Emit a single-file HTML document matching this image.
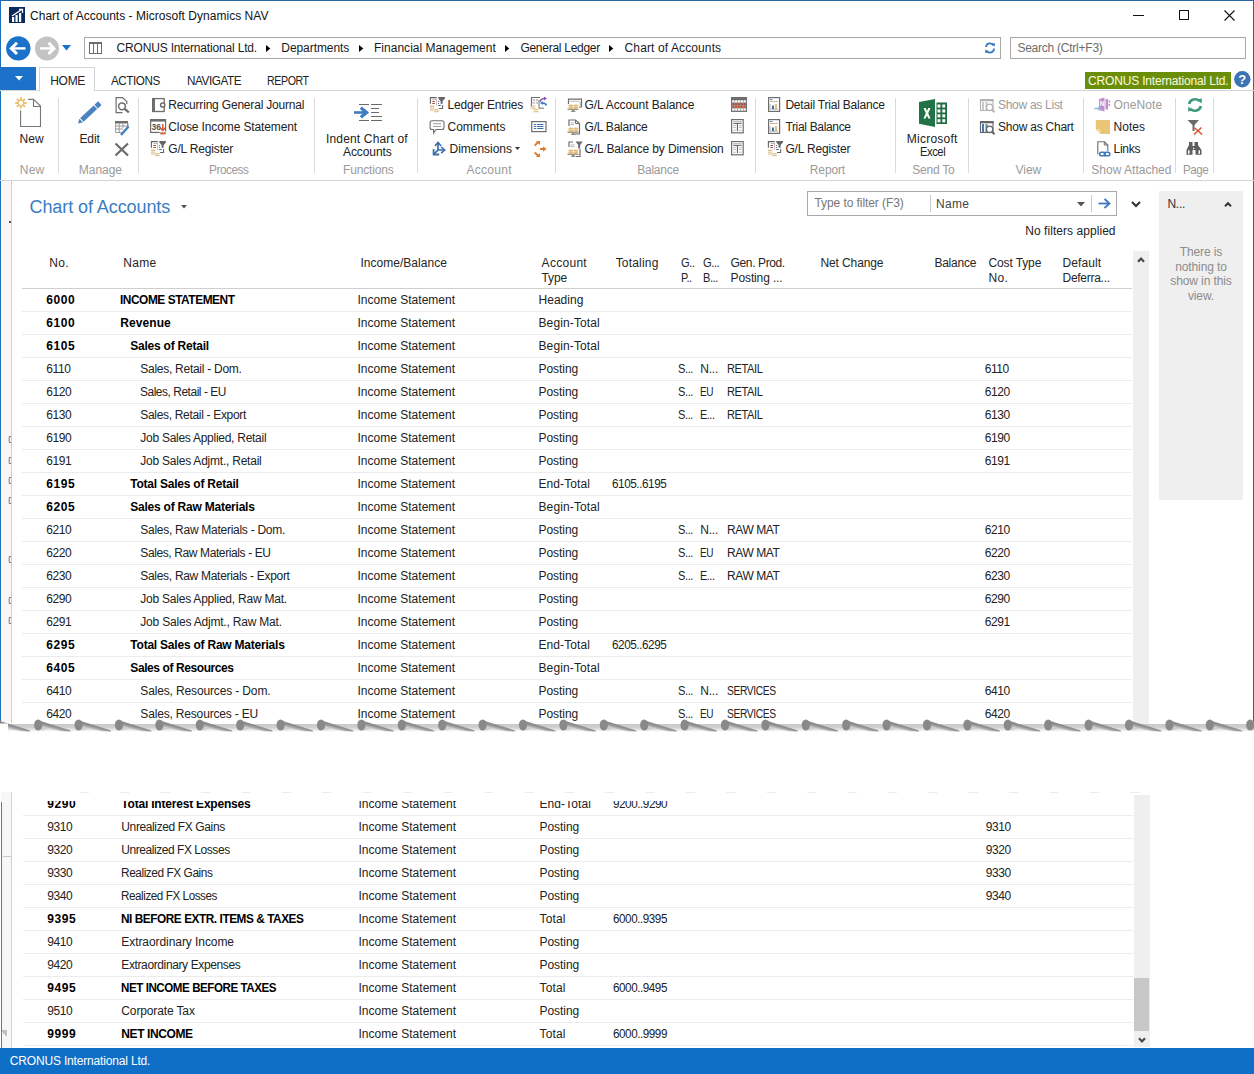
<!DOCTYPE html><html><head><meta charset="utf-8"><title>Chart of Accounts</title><style>
*{box-sizing:border-box;margin:0;padding:0}
html,body{width:1254px;height:1074px;overflow:hidden;background:#fff}
body{position:relative;font-family:"Liberation Sans",sans-serif;font-size:12px;color:#222}
.a{position:absolute;white-space:nowrap}
.t{position:absolute;white-space:nowrap;line-height:14px;letter-spacing:-0.2px}
.g{color:#9a9a9a}
.b{font-weight:bold;color:#000;letter-spacing:-0.45px}
.sep{position:absolute;width:1px;background:#dadada;top:98px;height:75px}
.row{position:absolute;left:22px;width:1110px;height:23px;border-bottom:1px solid #ececec}
.row span{position:absolute;top:0;line-height:22px;white-space:nowrap;letter-spacing:-0.2px}
.row span.b{letter-spacing:-0.45px}
svg{position:absolute;overflow:visible}
</style></head><body><div class="a" style="left:0;top:0;width:1254px;height:1px;background:#2868a4"></div>
<div class="a" style="left:0;top:0;width:1px;height:721px;background:#1e6fb8"></div>
<div class="a" style="left:1253px;top:0;width:1px;height:721px;background:#2868a4"></div>
<svg style="left:9px;top:7px" width="16" height="16" viewBox="0 0 16 16"><rect width="16" height="16" fill="#0b2a5a"/><rect x="3" y="10" width="2.2" height="5" fill="#fff"/><rect x="6.5" y="8" width="2.2" height="7" fill="#fff"/><rect x="10" y="6" width="2.2" height="9" fill="#fff"/><path d="M3 9 L12 3" stroke="#fff" stroke-width="1.3"/><path d="M10 2.5 L13.5 2.5 L13.5 6" stroke="#fff" stroke-width="1.3" fill="none"/></svg>
<div class="t " style="left:30.0px;top:8.8px;font-size:12px;letter-spacing:0.03px;color:#111">Chart of Accounts - Microsoft Dynamics NAV</div>
<div class="a" style="left:1133px;top:15px;width:11px;height:1px;background:#111"></div>
<div class="a" style="left:1179px;top:10px;width:10px;height:10px;border:1px solid #111"></div>
<svg style="left:1224px;top:10px" width="11" height="11" viewBox="0 0 11 11"><path d="M0.5 0.5 L10.5 10.5 M10.5 0.5 L0.5 10.5" stroke="#111" stroke-width="1.1"/></svg>
<svg style="left:6px;top:36px" width="25" height="25" viewBox="0 0 25 25"><circle cx="12.3" cy="12.4" r="12.2" fill="#1b72c8"/><path d="M5 12.4 L19.5 12.4" stroke="#fff" stroke-width="2.4"/><path d="M11 6.8 L5.3 12.4 L11 18" stroke="#fff" stroke-width="3" fill="none"/></svg>
<svg style="left:35px;top:36px" width="25" height="25" viewBox="0 0 25 25"><circle cx="12" cy="12.4" r="12" fill="#c3c3c3"/><path d="M5 12.4 L19 12.4" stroke="#fff" stroke-width="2.4"/><path d="M13.5 6.8 L19 12.4 L13.5 18" stroke="#fff" stroke-width="3" fill="none"/></svg>
<svg style="left:62px;top:45px" width="10" height="6" viewBox="0 0 10 6"><path d="M0 0 L9 0 L4.5 5.5 Z" fill="#1b72c8"/></svg>
<div class="a" style="left:84px;top:37px;width:917px;height:22px;border:1px solid #a9a9a9;background:#fff"></div>
<svg style="left:89px;top:42px" width="13" height="12" viewBox="0 0 13 12"><rect x="0.5" y="0.5" width="12" height="11" fill="none" stroke="#6d6d6d"/><rect x="0" y="0" width="13" height="2" fill="#6d6d6d"/><path d="M4.5 2 V12 M8.5 2 V12" stroke="#6d6d6d"/></svg>
<div class="t " style="left:116.5px;top:40.8px;font-size:12px;letter-spacing:-0.17px;color:#1a1a1a">CRONUS International Ltd.</div>
<div class="t " style="left:281.3px;top:40.8px;font-size:12px;letter-spacing:-0.07px;color:#1a1a1a">Departments</div>
<div class="t " style="left:374.0px;top:40.8px;font-size:12px;letter-spacing:0.02px;color:#1a1a1a">Financial Management</div>
<div class="t " style="left:520.4px;top:40.8px;font-size:12px;letter-spacing:-0.27px;color:#1a1a1a">General Ledger</div>
<div class="t " style="left:624.6px;top:40.8px;font-size:12px;letter-spacing:0.11px;color:#1a1a1a">Chart of Accounts</div>
<svg style="left:265.8px;top:45px" width="5" height="7" viewBox="0 0 5 7"><path d="M0 0 L4.3 3.5 L0 7Z" fill="#000"/></svg>
<svg style="left:359px;top:45px" width="5" height="7" viewBox="0 0 5 7"><path d="M0 0 L4.3 3.5 L0 7Z" fill="#000"/></svg>
<svg style="left:504.9px;top:45px" width="5" height="7" viewBox="0 0 5 7"><path d="M0 0 L4.3 3.5 L0 7Z" fill="#000"/></svg>
<svg style="left:609px;top:45px" width="5" height="7" viewBox="0 0 5 7"><path d="M0 0 L4.3 3.5 L0 7Z" fill="#000"/></svg>
<svg style="left:984px;top:42px" width="12" height="12" viewBox="0 0 12 12"><path d="M2 5 A4 4 0 0 1 9.5 3.5" stroke="#3a78c2" stroke-width="1.8" fill="none"/><path d="M10 6.5 A4 4 0 0 1 2.5 8.5" stroke="#3a78c2" stroke-width="1.8" fill="none"/><path d="M8 1 L11 1.5 L10.5 5 Z" fill="#3a78c2"/><path d="M4 11 L1 10.5 L1.5 7 Z" fill="#3a78c2"/></svg>
<div class="a" style="left:1010px;top:37px;width:236px;height:22px;border:1px solid #a9a9a9;background:#fff"></div>
<div class="t " style="left:1017.4px;top:41.3px;font-size:12px;letter-spacing:-0.24px;color:#6d6d6d">Search (Ctrl+F3)</div>
<div class="a" style="left:0;top:67px;width:36px;height:23px;background:#1b72c8"></div>
<svg style="left:15px;top:76px" width="8" height="5" viewBox="0 0 8 5"><path d="M0 0 L8 0 L4 4.5Z" fill="#fff"/></svg>
<div class="a" style="left:0;top:90px;width:1254px;height:1px;background:#d4d4d4"></div>
<div class="a" style="left:39px;top:67px;width:56px;height:24px;border:1px solid #d4d4d4;border-bottom:none;background:#fff"></div>
<div class="t " style="left:50.2px;top:73.8px;font-size:12px;letter-spacing:-0.27px;color:#222">HOME</div>
<div class="t " style="left:111.2px;top:73.8px;font-size:12px;letter-spacing:-0.45px;transform:scaleX(0.971);transform-origin:0 0;color:#222">ACTIONS</div>
<div class="t " style="left:186.5px;top:73.8px;font-size:12px;letter-spacing:-0.45px;transform:scaleX(0.979);transform-origin:0 0;color:#222">NAVIGATE</div>
<div class="t " style="left:266.9px;top:73.8px;font-size:12px;letter-spacing:-0.45px;transform:scaleX(0.885);transform-origin:0 0;color:#222">REPORT</div>
<div class="a" style="left:1085px;top:72px;width:146px;height:17px;background:#6b8e0a"></div>
<div class="t " style="left:1088.0px;top:74.3px;font-size:12px;letter-spacing:-0.17px;color:#fbfbe0">CRONUS International Ltd.</div>
<svg style="left:1234px;top:71px" width="17" height="17" viewBox="0 0 17 17"><circle cx="8.3" cy="8.2" r="8.2" fill="#3c73b5"/><text x="8.3" y="13" text-anchor="middle" font-family="Liberation Sans" font-weight="bold" font-size="13" fill="#fff">?</text></svg>
<svg style="left:12px;top:94px" width="40" height="36" viewBox="0 0 40 36"><path d="M16.1 5.4 H21.5 L28.5 12 V32.5 H8.6 V16.4" stroke="#777" stroke-width="1.1" fill="none"/><path d="M21.5 5.4 V12.5 H28.5" stroke="#777" stroke-width="1.1" fill="none"/><g stroke="#e8c070" stroke-width="2"><path d="M8.9 3.2 V6.9 M8.9 10.9 V14.6 M3.2 8.9 H6.9 M10.9 8.9 H14.6 M4.9 4.9 L7.5 7.5 M10.3 10.3 L12.9 12.9 M12.9 4.9 L10.3 7.5 M7.5 10.3 L4.9 12.9"/></g><circle cx="8.9" cy="8.9" r="1.3" fill="#fff"/></svg>
<svg style="left:76px;top:101px" width="26" height="25" viewBox="0 0 26 25"><path d="M2.00 22.50 L6.85 21.40 L3.44 17.74Z M7.58 20.72 L21.12 8.11 L17.71 4.45 L4.18 17.06Z M21.85 7.43 L25.50 4.03 L22.10 0.37 L18.45 3.77Z" fill="#4a82c0"/></svg>
<svg style="left:115px;top:97px" width="16" height="17" viewBox="0 0 16 17"><path d="M7.5 15.6 H1.1 V0.6 H7.5 L11.8 4.6 V7" stroke="#6e6e6e" stroke-width="1.2" fill="none"/><circle cx="7" cy="9.3" r="3.4" stroke="#6e6e6e" stroke-width="1.5" fill="none"/><path d="M9.4 11.7 L13.8 15.3" stroke="#6e6e6e" stroke-width="2.2"/></svg>
<svg style="left:114px;top:120px" width="17" height="16" viewBox="0 0 17 16"><rect x="1" y="1" width="13" height="2.5" fill="#6e6e6e"/><path d="M1.6 3 V12.5 H8 M1.6 6 H13 M1.6 9 H9 M5.2 3.5 V12.5 M9 3.5 V8" stroke="#9a9a9a" stroke-width="1" fill="none"/><path d="M13.8 3.5 V7" stroke="#6e6e6e" stroke-width="1.2"/><path d="M7 15 L14.5 6.5" stroke="#4a82c0" stroke-width="2.6"/></svg>
<svg style="left:114px;top:142px" width="16" height="15" viewBox="0 0 16 15"><path d="M1.5 1.5 L14 13.5 M14 1.5 L1.5 13.5" stroke="#6a6a6a" stroke-width="2.2"/></svg>
<svg style="left:151px;top:97px" width="15" height="16" viewBox="0 0 15 16"><rect x="1.7" y="1.6" width="11.5" height="12.9" fill="none" stroke="#6e6e6e" stroke-width="1.3"/><rect x="1" y="1" width="3" height="14" fill="#6e6e6e"/><circle cx="11.7" cy="8" r="2.1" fill="#fff" stroke="#6e6e6e" stroke-width="1.5"/></svg>
<svg style="left:149px;top:118px" width="18" height="18" viewBox="0 0 18 18"><rect x="1.6" y="1.8" width="15" height="12.6" fill="#fff" stroke="#6e6e6e" stroke-width="1.2"/><rect x="1" y="1" width="16" height="2.6" fill="#6e6e6e"/><text x="2.6" y="11.8" font-family="Liberation Sans" font-size="8.5" font-weight="bold" fill="#555">36</text><path d="M13.8 6 V12" stroke="#d4502a" stroke-width="1.4"/><path d="M11.3 9.8 L13.8 12.5 L16.3 9.8" stroke="#d4502a" stroke-width="1.4" fill="none"/><rect x="11.2" y="14.5" width="5.5" height="1.8" fill="#d4502a"/><rect x="10.5" y="13.5" width="7" height="1" fill="#fff"/></svg>
<svg style="left:150px;top:140px" width="18" height="18" viewBox="0 0 18 18"><path d="M1.4 7.8 V1.6 H7.8" stroke="#636363" stroke-width="1.1" fill="none"/><path d="M3.3 3.5 H8.2 M7.6 3.5 V9.8" stroke="#c4b4b4" stroke-width="0.9" fill="none"/><rect x="3.3" y="5" width="2.6" height="1" fill="#a0503a"/><rect x="3.3" y="7" width="2.6" height="1" fill="#a0503a"/><rect x="9.1" y="5" width="1" height="1" fill="#4a6590"/><rect x="9.1" y="7" width="1" height="1" fill="#4a6590"/><rect x="9.1" y="9" width="2.6" height="1" fill="#4a6590"/><path d="M9.3 0.9 H15.9 V2.6 L13.6 5 V7.8 H11.6 V5 L9.3 2.6Z" fill="#666"/><path d="M13.6 9.3 V12.5 H10" stroke="#636363" stroke-width="1.1" fill="none"/><g fill="#dcc393"><rect x="1" y="9.6" width="4.2" height="1.4"/><rect x="1" y="11.6" width="4.2" height="1.2"/><rect x="1" y="13.4" width="4.2" height="1.2"/><rect x="5.2" y="13" width="4.4" height="1.4"/><rect x="5.2" y="15" width="4.4" height="1.2"/></g><g fill="#f3ead0"><rect x="0.6" y="11" width="5" height="0.6"/><rect x="0.6" y="12.8" width="5" height="0.6"/><rect x="4.8" y="14.4" width="5.2" height="0.6"/></g></svg>
<svg style="left:348px;top:98px" width="40" height="28" viewBox="0 0 40 28"><path d="M6 14.5 H17.5" stroke="#3f7bbf" stroke-width="2.6"/><path d="M12.8 9.8 L18.6 14.5 L12.8 19.2" stroke="#3f7bbf" stroke-width="3.2" fill="none"/><g stroke="#6a6a6a" stroke-width="1.1"><path d="M11 6.5 H21 M23 6.5 H34 M23 10.5 H31 M23 14.5 H31 M23 18.5 H34 M11 22.5 H21 M23 22.5 H34"/></g></svg>
<svg style="left:429px;top:96px" width="18" height="18" viewBox="0 0 18 18"><path d="M1.4 7.8 V1.6 H7.8" stroke="#636363" stroke-width="1.1" fill="none"/><path d="M3.3 3.5 H8.2 M7.6 3.5 V9.8" stroke="#c4b4b4" stroke-width="0.9" fill="none"/><rect x="3.3" y="5" width="2.6" height="1" fill="#a0503a"/><rect x="3.3" y="7" width="2.6" height="1" fill="#a0503a"/><rect x="9.1" y="5" width="1" height="1" fill="#4a6590"/><rect x="9.1" y="7" width="1" height="1" fill="#4a6590"/><rect x="9.1" y="9" width="2.6" height="1" fill="#4a6590"/><path d="M9.3 0.9 H15.9 V2.6 L13.6 5 V7.8 H11.6 V5 L9.3 2.6Z" fill="#666"/><path d="M13.6 9.3 V12.5 H10" stroke="#636363" stroke-width="1.1" fill="none"/><g fill="#dcc393"><rect x="1" y="9.6" width="4.2" height="1.4"/><rect x="1" y="11.6" width="4.2" height="1.2"/><rect x="1" y="13.4" width="4.2" height="1.2"/><rect x="5.2" y="13" width="4.4" height="1.4"/><rect x="5.2" y="15" width="4.4" height="1.2"/></g><g fill="#f3ead0"><rect x="0.6" y="11" width="5" height="0.6"/><rect x="0.6" y="12.8" width="5" height="0.6"/><rect x="4.8" y="14.4" width="5.2" height="0.6"/></g></svg>
<svg style="left:429px;top:119px" width="17" height="16" viewBox="0 0 17 16"><path d="M3 1.7 H13 Q15 1.7 15 3.7 V8.5 Q15 10.5 13 10.5 H7 L4.6 14 V10.5 H3 Q1.1 10.5 1.1 8.5 V3.7 Q1.1 1.7 3 1.7Z" fill="#fff" stroke="#6e6e6e" stroke-width="1.1"/><path d="M4 4.7 H12 M4 7.4 H12" stroke="#9a9a9a" stroke-width="1"/></svg>
<svg style="left:432px;top:141px" width="14" height="15" viewBox="0 0 14 15"><g stroke="#3b6ea8" fill="none" stroke-linecap="square"><path d="M6 1.8 V9 H12.3 M6 9 L2.2 12.8" stroke-width="1.7"/><path d="M3.5 4.3 L6 1.5 L8.5 4.3 M9.8 6.5 L12.6 9 L9.8 11.5" stroke-width="1.6"/><path d="M1.6 8.8 V13.5 H6.3" stroke-width="1.8"/></g></svg>
<svg style="left:530px;top:96px" width="18" height="16" viewBox="0 0 18 16"><path d="M1.5 11 V1.5 H10" stroke="#6e6e6e" stroke-width="1.2" fill="none"/><g fill="#c8c8c8"><rect x="2.8" y="3" width="2.2" height="2"/><rect x="5.8" y="3" width="2.2" height="2"/><rect x="2.8" y="5.8" width="2.2" height="2"/><rect x="5.8" y="5.8" width="2.2" height="2"/></g><path d="M9 4 V12.2 H14" stroke="#6e6e6e" stroke-width="1" fill="none"/><path d="M10 5.5 Q11 2.5 15 2.5" stroke="#8a54a8" stroke-width="1.7" fill="none"/><path d="M14 0.5 L17 2.5 L14 4.5Z" fill="#8a54a8"/><path d="M16.5 9.5 Q15.5 6.8 12 7" stroke="#3f7bbf" stroke-width="1.7" fill="none"/><path d="M12.8 5 L10 7 L12.8 9Z" fill="#3f7bbf"/><g fill="#e5c88c"><rect x="0.5" y="9.5" width="5" height="1.3"/><rect x="0.5" y="11.5" width="5" height="1.3"/><rect x="3.5" y="13.0" width="5" height="1.3"/><rect x="3.5" y="15.0" width="5" height="1.3"/></g></svg>
<svg style="left:530px;top:120px" width="18" height="13" viewBox="0 0 18 13"><rect x="1.7" y="1.6" width="14.3" height="10" fill="#fff" stroke="#6e6e6e" stroke-width="1.2"/><g fill="#3f6fa8"><rect x="3.8" y="4" width="2.4" height="1"/><rect x="7.2" y="4" width="6.3" height="1"/><rect x="3.8" y="6" width="2.4" height="1"/><rect x="7.2" y="6" width="6.3" height="1"/><rect x="3.8" y="8" width="2.4" height="1"/><rect x="7.2" y="8" width="6.3" height="1"/></g></svg>
<svg style="left:533px;top:140px" width="14" height="18" viewBox="0 0 14 18"><g stroke="#e07b28" stroke-width="2" fill="none"><path d="M1.7 5.6 L5.5 1.8 M7 9 H11.5 M1.7 12.5 L5.5 16"/></g><path d="M3 1 H7 V5Z M10 6.2 L13.5 9 L10 11.8Z M3 17 H7 V13Z" fill="#e07b28"/></svg>
<svg style="left:567px;top:98px" width="16" height="15" viewBox="0 0 16 15"><path d="M1.5 6 V1.2 H14.5 V9 H12" stroke="#6e6e6e" stroke-width="1.2" fill="none"/><rect x="3" y="2.8" width="9.5" height="0.8" fill="#aaa"/><rect x="12.7" y="4.5" width="0.9" height="0.9" fill="#555"/><rect x="12.7" y="6.3" width="0.9" height="0.9" fill="#555"/><g fill="#e2bf80"><ellipse cx="3.8" cy="7.7" rx="2.6" ry="1.1"/><ellipse cx="3.8" cy="9.6" rx="2.6" ry="1.1"/><ellipse cx="8.8" cy="7.7" rx="2.6" ry="1.1"/><ellipse cx="8.8" cy="9.6" rx="2.6" ry="1.1"/></g><rect x="0.5" y="10.7" width="11" height="1.1" fill="#8c7b55"/><path d="M3.5 13.8 L6.2 11.8 L9 13.8 Z" fill="#6e6e6e"/></svg>
<svg style="left:567px;top:119px" width="16" height="17" viewBox="0 0 16 17"><g transform="translate(0,2)"><g fill="#e2bf80"><ellipse cx="3.8" cy="7.7" rx="2.6" ry="1.1"/><ellipse cx="3.8" cy="9.6" rx="2.6" ry="1.1"/><ellipse cx="8.8" cy="7.7" rx="2.6" ry="1.1"/><ellipse cx="8.8" cy="9.6" rx="2.6" ry="1.1"/></g><rect x="0.5" y="10.7" width="11" height="1.1" fill="#8c7b55"/><path d="M3.5 13.8 L6.2 11.8 L9 13.8 Z" fill="#6e6e6e"/></g><path d="M2 7 V1 H8.5 L12.5 4.5 V15 H8" stroke="#6e6e6e" stroke-width="1.2" fill="none"/><path d="M8.5 1 V4.5 H12.5" stroke="#6e6e6e" stroke-width="1" fill="none"/><rect x="3.5" y="3.5" width="3.5" height="0.8" fill="#aaa"/><rect x="3.5" y="5.3" width="3.5" height="0.8" fill="#aaa"/></svg>
<svg style="left:567px;top:141px" width="16" height="17" viewBox="0 0 16 17"><g transform="translate(0,2)"><g fill="#e2bf80"><ellipse cx="3.8" cy="7.7" rx="2.6" ry="1.1"/><ellipse cx="3.8" cy="9.6" rx="2.6" ry="1.1"/><ellipse cx="8.8" cy="7.7" rx="2.6" ry="1.1"/><ellipse cx="8.8" cy="9.6" rx="2.6" ry="1.1"/></g><rect x="0.5" y="10.7" width="11" height="1.1" fill="#8c7b55"/><path d="M3.5 13.8 L6.2 11.8 L9 13.8 Z" fill="#6e6e6e"/></g><path d="M2 6 V1 H6" stroke="#6e6e6e" stroke-width="1.2" fill="none"/><path d="M13 8 V15.5 H9" stroke="#6e6e6e" stroke-width="1.2" fill="none"/><path d="M8.5 0.5 H15.8 L13.2 4 V7.5 H11.2 V4 Z" fill="#6e6e6e"/><rect x="3.5" y="3.5" width="4" height="0.8" fill="#aaa"/><rect x="3.5" y="5.3" width="4" height="0.8" fill="#aaa"/></svg>
<svg style="left:731px;top:97px" width="16" height="15" viewBox="0 0 16 15"><rect x="0" y="0" width="16" height="15" fill="#6e6e6e"/><rect x="0.8" y="3" width="14.4" height="11.2" fill="#9a9a9a"/><rect x="1.30" y="3.40" width="2.1" height="2" fill="#fff"/><rect x="1.30" y="6.10" width="2.1" height="2" fill="#a85040"/><rect x="1.30" y="8.80" width="2.1" height="2" fill="#d4502a"/><rect x="1.30" y="11.50" width="2.1" height="2" fill="#fff"/><rect x="4.15" y="3.40" width="2.1" height="2" fill="#fff"/><rect x="4.15" y="6.10" width="2.1" height="2" fill="#a85040"/><rect x="4.15" y="8.80" width="2.1" height="2" fill="#d4502a"/><rect x="4.15" y="11.50" width="2.1" height="2" fill="#fff"/><rect x="7.00" y="3.40" width="2.1" height="2" fill="#fff"/><rect x="7.00" y="6.10" width="2.1" height="2" fill="#a85040"/><rect x="7.00" y="8.80" width="2.1" height="2" fill="#d4502a"/><rect x="7.00" y="11.50" width="2.1" height="2" fill="#fff"/><rect x="9.85" y="3.40" width="2.1" height="2" fill="#fff"/><rect x="9.85" y="6.10" width="2.1" height="2" fill="#a85040"/><rect x="9.85" y="8.80" width="2.1" height="2" fill="#d4502a"/><rect x="9.85" y="11.50" width="2.1" height="2" fill="#fff"/><rect x="12.70" y="3.40" width="2.1" height="2" fill="#fff"/><rect x="12.70" y="6.10" width="2.1" height="2" fill="#a85040"/><rect x="12.70" y="8.80" width="2.1" height="2" fill="#d4502a"/><rect x="12.70" y="11.50" width="2.1" height="2" fill="#fff"/></svg>
<svg style="left:731px;top:119px" width="14" height="15" viewBox="0 0 14 15"><rect x="0.6" y="0.6" width="11.6" height="13.2" fill="#fff" stroke="#6e6e6e" stroke-width="1.2"/><rect x="2.2" y="2.2" width="8.5" height="0.7" fill="#aaa"/><rect x="2.2" y="3.8" width="8.5" height="1" fill="#555"/><rect x="5.9" y="4.3" width="1" height="7.8" fill="#555"/><g fill="#aaa"><rect x="2.2" y="6.3" width="2.6" height="0.8"/><rect x="2.2" y="8" width="2.6" height="0.8"/><rect x="2.2" y="10.8" width="2.6" height="0.8"/><rect x="8" y="6.3" width="2.6" height="0.8"/><rect x="8" y="8" width="2.6" height="0.8"/><rect x="8" y="10.8" width="2.6" height="0.8"/></g></svg>
<svg style="left:731px;top:141px" width="14" height="15" viewBox="0 0 14 15"><rect x="0.6" y="0.6" width="11.6" height="13.2" fill="#fff" stroke="#6e6e6e" stroke-width="1.2"/><rect x="2.2" y="2.2" width="8.5" height="0.7" fill="#aaa"/><rect x="2.2" y="3.8" width="8.5" height="1" fill="#555"/><rect x="5.9" y="4.3" width="1" height="7.8" fill="#555"/><g fill="#aaa"><rect x="2.2" y="6.3" width="2.6" height="0.8"/><rect x="2.2" y="8" width="2.6" height="0.8"/><rect x="2.2" y="10.8" width="2.6" height="0.8"/><rect x="8" y="6.3" width="2.6" height="0.8"/><rect x="8" y="8" width="2.6" height="0.8"/><rect x="8" y="10.8" width="2.6" height="0.8"/></g></svg>
<svg style="left:768px;top:97px" width="13" height="15" viewBox="0 0 13 15"><rect x="0.6" y="0.6" width="11" height="13.8" fill="#fff" stroke="#6e6e6e" stroke-width="1.2"/><rect x="2" y="2.2" width="2.5" height="0.9" fill="#3f6fa8"/><rect x="2" y="4.2" width="8" height="0.8" fill="#c8a27a"/><path d="M2 7 V12.2 H10" stroke="#999" stroke-width="0.8" fill="none"/><rect x="4" y="8.5" width="2" height="3.5" fill="#3f6fa8"/><rect x="7" y="7" width="2" height="5" fill="#e2bf80"/></svg>
<svg style="left:768px;top:119px" width="13" height="15" viewBox="0 0 13 15"><rect x="0.6" y="0.6" width="11" height="13.8" fill="#fff" stroke="#6e6e6e" stroke-width="1.2"/><rect x="2" y="2.2" width="2.5" height="0.9" fill="#3f6fa8"/><rect x="2" y="4.2" width="8" height="0.8" fill="#c8a27a"/><path d="M2 7 V12.2 H10" stroke="#999" stroke-width="0.8" fill="none"/><rect x="4" y="8.5" width="2" height="3.5" fill="#3f6fa8"/><rect x="7" y="7" width="2" height="5" fill="#e2bf80"/></svg>
<svg style="left:767px;top:140px" width="18" height="18" viewBox="0 0 18 18"><path d="M1.4 7.8 V1.6 H7.8" stroke="#636363" stroke-width="1.1" fill="none"/><path d="M3.3 3.5 H8.2 M7.6 3.5 V9.8" stroke="#c4b4b4" stroke-width="0.9" fill="none"/><rect x="3.3" y="5" width="2.6" height="1" fill="#a0503a"/><rect x="3.3" y="7" width="2.6" height="1" fill="#a0503a"/><rect x="9.1" y="5" width="1" height="1" fill="#4a6590"/><rect x="9.1" y="7" width="1" height="1" fill="#4a6590"/><rect x="9.1" y="9" width="2.6" height="1" fill="#4a6590"/><path d="M9.3 0.9 H15.9 V2.6 L13.6 5 V7.8 H11.6 V5 L9.3 2.6Z" fill="#666"/><path d="M13.6 9.3 V12.5 H10" stroke="#636363" stroke-width="1.1" fill="none"/><g fill="#dcc393"><rect x="1" y="9.6" width="4.2" height="1.4"/><rect x="1" y="11.6" width="4.2" height="1.2"/><rect x="1" y="13.4" width="4.2" height="1.2"/><rect x="5.2" y="13" width="4.4" height="1.4"/><rect x="5.2" y="15" width="4.4" height="1.2"/></g><g fill="#f3ead0"><rect x="0.6" y="11" width="5" height="0.6"/><rect x="0.6" y="12.8" width="5" height="0.6"/><rect x="4.8" y="14.4" width="5.2" height="0.6"/></g></svg>
<svg style="left:918px;top:98px" width="30" height="30" viewBox="0 0 30 30"><path d="M1 4 L17 1 V29 L1 25.8 Z" fill="#217346"/><path d="M5.5 10 L7.7 10 L9 13 L10.3 10 L12.5 10 L10.2 15.2 L12.6 20.5 L10.4 20.5 L9 17.4 L7.6 20.5 L5.4 20.5 L7.8 15.2 Z" fill="#fff"/><rect x="18.5" y="4.5" width="10.5" height="21.5" fill="#1e6e3f"/><rect x="19.5" y="6.5" width="2.9" height="3.1" fill="#fff"/><rect x="19.5" y="11.4" width="2.9" height="3.1" fill="#fff"/><rect x="19.5" y="16.3" width="2.9" height="3.1" fill="#fff"/><rect x="19.5" y="21.2" width="2.9" height="3.1" fill="#fff"/><rect x="24.3" y="6.5" width="2.9" height="3.1" fill="#fff"/><rect x="24.3" y="11.4" width="2.9" height="3.1" fill="#fff"/><rect x="24.3" y="16.3" width="2.9" height="3.1" fill="#fff"/><rect x="24.3" y="21.2" width="2.9" height="3.1" fill="#fff"/></svg>
<svg style="left:979px;top:98px" width="18" height="16" viewBox="0 0 18 16"><rect x="1.5" y="1.6" width="12.5" height="10.9" fill="#fff" stroke="#b3b3b3" stroke-width="1.1"/><rect x="1" y="1" width="13.5" height="2.3" fill="#b3b3b3"/><rect x="3" y="4" width="2" height="8" fill="#c8c8c8"/><rect x="6.5" y="4" width="2" height="8" fill="#c8c8c8"/><circle cx="10.6" cy="9.3" r="3.2" fill="#fff" stroke="#b3b3b3" stroke-width="1.3"/><path d="M12.8 11.5 L15.5 14.2" stroke="#b3b3b3" stroke-width="2"/></svg>
<svg style="left:979px;top:120px" width="18" height="16" viewBox="0 0 18 16"><rect x="1.5" y="1.6" width="12.5" height="10.9" fill="#fff" stroke="#666" stroke-width="1.1"/><rect x="1" y="1" width="13.5" height="2.3" fill="#666"/><rect x="3" y="4" width="2" height="8" fill="#3f7bbf"/><rect x="6.5" y="4" width="2" height="8" fill="#6f8a80"/><circle cx="10.6" cy="9.3" r="3.2" fill="#fff" stroke="#666" stroke-width="1.3"/><path d="M12.8 11.5 L15.5 14.2" stroke="#666" stroke-width="2"/></svg>
<svg style="left:1094px;top:97px" width="18" height="15" viewBox="0 0 18 15"><path d="M5 2 L10.5 0.5 V14.5 L5 13 Z" fill="#c190cc"/><path d="M11.5 2 H14 V12.5 H11.5Z" fill="#c190cc"/><rect x="14.6" y="3.5" width="1.6" height="2" fill="#c190cc"/><rect x="14.6" y="7" width="1.6" height="2" fill="#c190cc"/><text x="5.8" y="8.5" font-family="Liberation Sans" font-size="6.5" font-weight="bold" fill="#fff">N</text><path d="M0.5 11.5 H6" stroke="#8fb2d6" stroke-width="1.5"/><path d="M4.5 9 L7.2 11.5 L4.5 14Z" fill="#8fb2d6"/></svg>
<svg style="left:1095px;top:120px" width="15" height="14" viewBox="0 0 15 14"><path d="M0.8 0 H15 V14 H5.5 L0.8 9.5Z" fill="#ebc577"/><path d="M0.8 9.5 H5.5 V14Z" fill="#f5deb0"/></svg>
<svg style="left:1097px;top:141px" width="15" height="17" viewBox="0 0 15 17"><path d="M0.8 13.5 V0.8 H7.5 L10.8 4 V10" stroke="#6e6e6e" stroke-width="1.1" fill="none"/><path d="M7.3 0.8 V4 H10.8" stroke="#6e6e6e" stroke-width="1" fill="none"/><g stroke="#3f7bbf" stroke-width="1.6" fill="none"><rect x="2.7" y="11.2" width="5.5" height="3.6" rx="1.8"/><rect x="7.3" y="11.2" width="5.5" height="3.6" rx="1.8"/></g></svg>
<svg style="left:1187px;top:97px" width="16" height="16" viewBox="0 0 16 16"><path d="M2.2 7 A6 5.5 0 0 1 12.5 4" stroke="#3e9a78" stroke-width="2.6" fill="none"/><path d="M13.8 9 A6 5.5 0 0 1 3.5 12" stroke="#3e9a78" stroke-width="2.6" fill="none"/><path d="M10 2.5 L15 1.5 L14.5 6.5Z M6 13.5 L1 14.5 L1.5 9.5Z" fill="#3e9a78"/></svg>
<svg style="left:1187px;top:119px" width="17" height="17" viewBox="0 0 17 17"><path d="M0.5 1 H12 L7.5 6 V12 H5.5 V6 Z" fill="#6a6a6a"/><path d="M7.5 8.8 L15 15.5 M14.5 8.5 L7 15.5" stroke="#d9502a" stroke-width="1.5"/></svg>
<svg style="left:1186px;top:141px" width="17" height="15" viewBox="0 0 17 15"><path d="M3 1 H6.5 V5 H8.5 V1 H12 V4 L15.5 9 V13.8 H9.5 V9 H6.5 V13.8 H0.5 V9 L3 4Z" fill="#5e5e5e"/><rect x="2" y="9.3" width="1.5" height="3.5" fill="#fff"/><rect x="12.5" y="9.3" width="1.5" height="3.5" fill="#fff"/><circle cx="7.6" cy="7.5" r="0.8" fill="#fff"/></svg>
<div class="a" style="left:0;top:180px;width:1254px;height:1px;background:#d4d4d4"></div>
<div class="sep" style="left:58.0px"></div>
<div class="sep" style="left:138.0px"></div>
<div class="sep" style="left:314.0px"></div>
<div class="sep" style="left:417.0px"></div>
<div class="sep" style="left:555.0px"></div>
<div class="sep" style="left:755.0px"></div>
<div class="sep" style="left:894.5px"></div>
<div class="sep" style="left:968.0px"></div>
<div class="sep" style="left:1083.0px"></div>
<div class="sep" style="left:1174.5px"></div>
<div class="sep" style="left:1212.5px"></div>
<div class="t g" style="left:19.8px;top:162.8px;font-size:12px;letter-spacing:0.19px;">New</div>
<div class="t g" style="left:78.8px;top:162.8px;font-size:12px;letter-spacing:-0.03px;">Manage</div>
<div class="t g" style="left:208.6px;top:162.8px;font-size:12px;letter-spacing:-0.45px;transform:scaleX(0.983);transform-origin:0 0;">Process</div>
<div class="t g" style="left:343.0px;top:162.8px;font-size:12px;letter-spacing:-0.17px;">Functions</div>
<div class="t g" style="left:466.5px;top:162.8px;font-size:12px;letter-spacing:0.29px;">Account</div>
<div class="t g" style="left:637.2px;top:162.8px;font-size:12px;letter-spacing:-0.23px;">Balance</div>
<div class="t g" style="left:809.8px;top:162.8px;font-size:12px;letter-spacing:-0.13px;">Report</div>
<div class="t g" style="left:912.3px;top:162.8px;font-size:12px;letter-spacing:-0.25px;">Send To</div>
<div class="t g" style="left:1015.6px;top:162.8px;font-size:12px;letter-spacing:-0.07px;">View</div>
<div class="t g" style="left:1091.3px;top:162.8px;font-size:12px;letter-spacing:0.01px;">Show Attached</div>
<div class="t g" style="left:1183.2px;top:162.8px;font-size:12px;letter-spacing:-0.45px;transform:scaleX(0.966);transform-origin:0 0;">Page</div>
<div class="t " style="left:19.4px;top:131.8px;font-size:12px;letter-spacing:0.19px;">New</div>
<div class="t " style="left:79.4px;top:131.8px;font-size:12px;letter-spacing:-0.06px;">Edit</div>
<div class="t " style="left:326.0px;top:131.8px;font-size:12px;letter-spacing:0.16px;">Indent Chart of</div>
<div class="t " style="left:343.0px;top:144.8px;font-size:12px;letter-spacing:-0.09px;">Accounts</div>
<div class="t " style="left:906.8px;top:131.8px;font-size:12px;letter-spacing:0.23px;">Microsoft</div>
<div class="t " style="left:919.7px;top:144.8px;font-size:12px;letter-spacing:-0.45px;transform:scaleX(0.931);transform-origin:0 0;">Excel</div>
<div class="t " style="left:168.3px;top:97.6px;font-size:12px;letter-spacing:-0.19px;">Recurring General Journal</div>
<div class="t " style="left:168.3px;top:119.6px;font-size:12px;letter-spacing:-0.12px;">Close Income Statement</div>
<div class="t " style="left:168.3px;top:141.6px;font-size:12px;letter-spacing:-0.17px;">G/L Register</div>
<div class="t " style="left:447.6px;top:97.6px;font-size:12px;letter-spacing:-0.18px;">Ledger Entries</div>
<div class="t " style="left:447.6px;top:119.6px;font-size:12px;letter-spacing:-0.03px;">Comments</div>
<div class="t " style="left:449.6px;top:141.6px;font-size:12px;letter-spacing:-0.03px;">Dimensions</div>
<div class="t " style="left:584.6px;top:97.6px;font-size:12px;letter-spacing:-0.10px;">G/L Account Balance</div>
<div class="t " style="left:584.6px;top:119.6px;font-size:12px;letter-spacing:-0.24px;">G/L Balance</div>
<div class="t " style="left:584.6px;top:141.6px;font-size:12px;letter-spacing:-0.11px;">G/L Balance by Dimension</div>
<div class="t " style="left:785.4px;top:97.6px;font-size:12px;letter-spacing:-0.20px;">Detail Trial Balance</div>
<div class="t " style="left:785.4px;top:119.6px;font-size:12px;letter-spacing:-0.33px;">Trial Balance</div>
<div class="t " style="left:785.4px;top:141.6px;font-size:12px;letter-spacing:-0.17px;">G/L Register</div>
<div class="t g" style="left:998.0px;top:97.6px;font-size:12px;letter-spacing:-0.28px;">Show as List</div>
<div class="t " style="left:998.0px;top:119.6px;font-size:12px;letter-spacing:-0.23px;">Show as Chart</div>
<div class="t g" style="left:1113.6px;top:97.6px;font-size:12px;letter-spacing:0.09px;">OneNote</div>
<div class="t " style="left:1113.6px;top:119.6px;font-size:12px;letter-spacing:0.01px;">Notes</div>
<div class="t " style="left:1113.6px;top:141.6px;font-size:12px;letter-spacing:-0.30px;">Links</div>
<svg style="left:515px;top:147px" width="5" height="3" viewBox="0 0 5 3"><path d="M0 0 L5 0 L2.5 3Z" fill="#333"/></svg>
<div class="a" style="left:1px;top:181px;width:11px;height:542px;background:#f8f6f6;border-right:1px solid #cfcfcf"></div>
<div class="t " style="left:29.5px;top:200.2px;font-size:18px;letter-spacing:-0.08px;color:#3a7dc2">Chart of Accounts</div>
<svg style="left:180.5px;top:205px" width="6" height="4" viewBox="0 0 6 4"><path d="M0 0 L6 0 L3 3.5Z" fill="#555"/></svg>
<div class="a" style="left:807px;top:191px;width:310px;height:25px;border:1px solid #a9a9a9;background:#fff"></div>
<div class="t " style="left:814.4px;top:196.3px;font-size:12px;letter-spacing:-0.07px;color:#777">Type to filter (F3)</div>
<div class="a" style="left:930px;top:195px;width:1px;height:17px;background:#c9c9c9"></div>
<div class="t " style="left:936.0px;top:196.8px;font-size:12px;letter-spacing:0.29px;color:#444">Name</div>
<svg style="left:1077px;top:202px" width="8" height="5" viewBox="0 0 8 5"><path d="M0 0 L8 0 L4 4.5Z" fill="#555"/></svg>
<div class="a" style="left:1091px;top:195px;width:1px;height:17px;background:#c9c9c9"></div>
<svg style="left:1098px;top:198px" width="13" height="11" viewBox="0 0 13 11"><path d="M0.5 5.5 L11 5.5" stroke="#3b78c0" stroke-width="1.8"/><path d="M6.5 1 L11.5 5.5 L6.5 10" stroke="#3b78c0" stroke-width="1.8" fill="none"/></svg>
<svg style="left:1131px;top:201px" width="10" height="6" viewBox="0 0 10 6"><path d="M1 1 L5 5 L9 1" stroke="#333" stroke-width="2.1" fill="none"/></svg>
<div class="t " style="left:1025.3px;top:224.3px;font-size:12px;letter-spacing:0.05px;color:#222">No filters applied</div>
<div class="a" style="left:1159px;top:191px;width:84px;height:309px;background:#efefef"></div>
<div class="t " style="left:1167.4px;top:196.8px;font-size:12px;letter-spacing:-0.22px;color:#333">N...</div>
<svg style="left:1224px;top:202px" width="8" height="5" viewBox="0 0 8 5"><path d="M1 4.2 L4 1.2 L7 4.2" stroke="#333" stroke-width="2" fill="none"/></svg>
<div class="t g" style="left:1159px;width:84px;text-align:center;top:244.8px;color:#8c8c8c;letter-spacing:-0.1px">There is</div>
<div class="t g" style="left:1159px;width:84px;text-align:center;top:259.5px;color:#8c8c8c;letter-spacing:-0.1px">nothing to</div>
<div class="t g" style="left:1159px;width:84px;text-align:center;top:274.2px;color:#8c8c8c;letter-spacing:-0.1px">show in this</div>
<div class="t g" style="left:1159px;width:84px;text-align:center;top:288.9px;color:#8c8c8c;letter-spacing:-0.1px">view.</div>
<div class="t " style="left:49.3px;top:255.8px;font-size:12px;letter-spacing:0.36px;color:#262626">No.</div>
<div class="t " style="left:123.3px;top:255.8px;font-size:12px;letter-spacing:0.29px;color:#262626">Name</div>
<div class="t " style="left:360.4px;top:255.8px;font-size:12px;letter-spacing:0.03px;color:#262626">Income/Balance</div>
<div class="t " style="left:541.6px;top:255.8px;font-size:12px;letter-spacing:0.29px;color:#262626">Account</div>
<div class="t " style="left:541.6px;top:270.8px;font-size:12px;letter-spacing:-0.16px;color:#262626">Type</div>
<div class="t " style="left:615.7px;top:255.8px;font-size:12px;letter-spacing:0.18px;color:#262626">Totaling</div>
<div class="t " style="left:681.1px;top:255.8px;font-size:12px;letter-spacing:-0.45px;transform:scaleX(0.925);transform-origin:0 0;color:#262626">G..</div>
<div class="t " style="left:681.1px;top:270.8px;font-size:12px;letter-spacing:-0.45px;transform:scaleX(0.906);transform-origin:0 0;color:#262626">P..</div>
<div class="t " style="left:703.3px;top:255.8px;font-size:12px;letter-spacing:-0.45px;transform:scaleX(0.927);transform-origin:0 0;color:#262626">G...</div>
<div class="t " style="left:703.3px;top:270.8px;font-size:12px;letter-spacing:-0.45px;transform:scaleX(0.921);transform-origin:0 0;color:#262626">B...</div>
<div class="t " style="left:730.6px;top:255.8px;font-size:12px;letter-spacing:-0.38px;color:#262626">Gen. Prod.</div>
<div class="t " style="left:730.6px;top:270.8px;font-size:12px;letter-spacing:-0.13px;color:#262626">Posting ...</div>
<div class="t " style="left:820.5px;top:255.8px;font-size:12px;letter-spacing:-0.12px;color:#262626">Net Change</div>
<div class="t " style="left:934.4px;top:255.8px;font-size:12px;letter-spacing:-0.23px;color:#262626">Balance</div>
<div class="t " style="left:988.4px;top:255.8px;font-size:12px;letter-spacing:-0.11px;color:#262626">Cost Type</div>
<div class="t " style="left:988.4px;top:270.8px;font-size:12px;letter-spacing:0.36px;color:#262626">No.</div>
<div class="t " style="left:1062.5px;top:255.8px;font-size:12px;letter-spacing:0.09px;color:#262626">Default</div>
<div class="t " style="left:1062.5px;top:270.8px;font-size:12px;letter-spacing:-0.27px;color:#262626">Deferra...</div>
<div class="a" style="left:22px;top:288px;width:1110px;height:1px;background:#cfcfcf"></div>
<div class="a" style="left:1133px;top:251px;width:16px;height:473px;background:#efefef"></div>
<svg style="left:1137px;top:257px" width="8" height="6" viewBox="0 0 8 6"><path d="M1 4.8 L4 1.6 L7 4.8" stroke="#484848" stroke-width="2.2" fill="none"/></svg>
<div class="a" style="left:0;top:289px;width:1254px;height:434px;overflow:hidden">
<div class="a" style="left:0;top:-289px;width:1254px;height:1074px">
<div class="row" style="top:289px;left:22px"><span class="b" style="left:24.3px;letter-spacing:0.53px;">6000</span><span class="b" style="left:98.3px;letter-spacing:-0.45px;transform:scaleX(0.990);transform-origin:0 0;">INCOME STATEMENT</span><span style="left:335.4px;letter-spacing:0.02px;">Income Statement</span><span style="left:516.5px;letter-spacing:0.03px;">Heading</span></div>
<div class="row" style="top:312px;left:22px"><span class="b" style="left:24.3px;letter-spacing:0.53px;">6100</span><span class="b" style="left:98.3px;letter-spacing:0.08px;">Revenue</span><span style="left:335.4px;letter-spacing:0.02px;">Income Statement</span><span style="left:516.5px;letter-spacing:0.12px;">Begin-Total</span></div>
<div class="row" style="top:335px;left:22px"><span class="b" style="left:24.3px;letter-spacing:0.53px;">6105</span><span class="b" style="left:108.3px;letter-spacing:-0.23px;">Sales of Retail</span><span style="left:335.4px;letter-spacing:0.02px;">Income Statement</span><span style="left:516.5px;letter-spacing:0.12px;">Begin-Total</span></div>
<div class="row" style="top:358px;left:22px"><span style="left:24.3px;letter-spacing:-0.40px;">6110</span><span style="left:118.3px;letter-spacing:-0.27px;">Sales, Retail - Dom.</span><span style="left:335.4px;letter-spacing:0.02px;">Income Statement</span><span style="left:516.5px;letter-spacing:-0.04px;">Posting</span><span style="left:655.8px;letter-spacing:-0.45px;transform:scaleX(0.926);transform-origin:0 0;">S...</span><span style="left:678.3px;letter-spacing:-0.22px;">N...</span><span style="left:705.1px;letter-spacing:-0.45px;transform:scaleX(0.921);transform-origin:0 0;">RETAIL</span><span style="left:962.7px;letter-spacing:-0.40px;">6110</span></div>
<div class="row" style="top:381px;left:22px"><span style="left:24.3px;letter-spacing:-0.40px;">6120</span><span style="left:118.3px;letter-spacing:-0.45px;transform:scaleX(0.992);transform-origin:0 0;">Sales, Retail - EU</span><span style="left:335.4px;letter-spacing:0.02px;">Income Statement</span><span style="left:516.5px;letter-spacing:-0.04px;">Posting</span><span style="left:655.8px;letter-spacing:-0.45px;transform:scaleX(0.926);transform-origin:0 0;">S...</span><span style="left:678.3px;letter-spacing:-0.45px;transform:scaleX(0.834);transform-origin:0 0;">EU</span><span style="left:705.1px;letter-spacing:-0.45px;transform:scaleX(0.921);transform-origin:0 0;">RETAIL</span><span style="left:962.7px;letter-spacing:-0.40px;">6120</span></div>
<div class="row" style="top:404px;left:22px"><span style="left:24.3px;letter-spacing:-0.40px;">6130</span><span style="left:118.3px;letter-spacing:-0.32px;">Sales, Retail - Export</span><span style="left:335.4px;letter-spacing:0.02px;">Income Statement</span><span style="left:516.5px;letter-spacing:-0.04px;">Posting</span><span style="left:655.8px;letter-spacing:-0.45px;transform:scaleX(0.926);transform-origin:0 0;">S...</span><span style="left:678.3px;letter-spacing:-0.45px;transform:scaleX(0.894);transform-origin:0 0;">E...</span><span style="left:705.1px;letter-spacing:-0.45px;transform:scaleX(0.921);transform-origin:0 0;">RETAIL</span><span style="left:962.7px;letter-spacing:-0.40px;">6130</span></div>
<div class="row" style="top:427px;left:22px"><span style="left:24.3px;letter-spacing:-0.40px;">6190</span><span style="left:118.3px;letter-spacing:-0.27px;">Job Sales Applied, Retail</span><span style="left:335.4px;letter-spacing:0.02px;">Income Statement</span><span style="left:516.5px;letter-spacing:-0.04px;">Posting</span><span style="left:962.7px;letter-spacing:-0.40px;">6190</span></div>
<div class="row" style="top:450px;left:22px"><span style="left:24.3px;letter-spacing:-0.40px;">6191</span><span style="left:118.3px;letter-spacing:-0.23px;">Job Sales Adjmt., Retail</span><span style="left:335.4px;letter-spacing:0.02px;">Income Statement</span><span style="left:516.5px;letter-spacing:-0.04px;">Posting</span><span style="left:962.7px;letter-spacing:-0.40px;">6191</span></div>
<div class="row" style="top:473px;left:22px"><span class="b" style="left:24.3px;letter-spacing:0.53px;">6195</span><span class="b" style="left:108.3px;letter-spacing:-0.23px;">Total Sales of Retail</span><span style="left:335.4px;letter-spacing:0.02px;">Income Statement</span><span style="left:516.5px;letter-spacing:0.09px;">End-Total</span><span style="left:590.4px;letter-spacing:-0.45px;transform:scaleX(0.978);transform-origin:0 0;">6105..6195</span></div>
<div class="row" style="top:496px;left:22px"><span class="b" style="left:24.3px;letter-spacing:0.53px;">6205</span><span class="b" style="left:108.3px;letter-spacing:-0.23px;">Sales of Raw Materials</span><span style="left:335.4px;letter-spacing:0.02px;">Income Statement</span><span style="left:516.5px;letter-spacing:0.12px;">Begin-Total</span></div>
<div class="row" style="top:519px;left:22px"><span style="left:24.3px;letter-spacing:-0.40px;">6210</span><span style="left:118.3px;letter-spacing:-0.27px;">Sales, Raw Materials - Dom.</span><span style="left:335.4px;letter-spacing:0.02px;">Income Statement</span><span style="left:516.5px;letter-spacing:-0.04px;">Posting</span><span style="left:655.8px;letter-spacing:-0.45px;transform:scaleX(0.926);transform-origin:0 0;">S...</span><span style="left:678.3px;letter-spacing:-0.22px;">N...</span><span style="left:705.1px;letter-spacing:-0.44px;">RAW MAT</span><span style="left:962.7px;letter-spacing:-0.40px;">6210</span></div>
<div class="row" style="top:542px;left:22px"><span style="left:24.3px;letter-spacing:-0.40px;">6220</span><span style="left:118.3px;letter-spacing:-0.39px;">Sales, Raw Materials - EU</span><span style="left:335.4px;letter-spacing:0.02px;">Income Statement</span><span style="left:516.5px;letter-spacing:-0.04px;">Posting</span><span style="left:655.8px;letter-spacing:-0.45px;transform:scaleX(0.926);transform-origin:0 0;">S...</span><span style="left:678.3px;letter-spacing:-0.45px;transform:scaleX(0.834);transform-origin:0 0;">EU</span><span style="left:705.1px;letter-spacing:-0.44px;">RAW MAT</span><span style="left:962.7px;letter-spacing:-0.40px;">6220</span></div>
<div class="row" style="top:565px;left:22px"><span style="left:24.3px;letter-spacing:-0.40px;">6230</span><span style="left:118.3px;letter-spacing:-0.30px;">Sales, Raw Materials - Export</span><span style="left:335.4px;letter-spacing:0.02px;">Income Statement</span><span style="left:516.5px;letter-spacing:-0.04px;">Posting</span><span style="left:655.8px;letter-spacing:-0.45px;transform:scaleX(0.926);transform-origin:0 0;">S...</span><span style="left:678.3px;letter-spacing:-0.45px;transform:scaleX(0.894);transform-origin:0 0;">E...</span><span style="left:705.1px;letter-spacing:-0.44px;">RAW MAT</span><span style="left:962.7px;letter-spacing:-0.40px;">6230</span></div>
<div class="row" style="top:588px;left:22px"><span style="left:24.3px;letter-spacing:-0.40px;">6290</span><span style="left:118.3px;letter-spacing:-0.23px;">Job Sales Applied, Raw Mat.</span><span style="left:335.4px;letter-spacing:0.02px;">Income Statement</span><span style="left:516.5px;letter-spacing:-0.04px;">Posting</span><span style="left:962.7px;letter-spacing:-0.40px;">6290</span></div>
<div class="row" style="top:611px;left:22px"><span style="left:24.3px;letter-spacing:-0.40px;">6291</span><span style="left:118.3px;letter-spacing:-0.20px;">Job Sales Adjmt., Raw Mat.</span><span style="left:335.4px;letter-spacing:0.02px;">Income Statement</span><span style="left:516.5px;letter-spacing:-0.04px;">Posting</span><span style="left:962.7px;letter-spacing:-0.40px;">6291</span></div>
<div class="row" style="top:634px;left:22px"><span class="b" style="left:24.3px;letter-spacing:0.53px;">6295</span><span class="b" style="left:108.3px;letter-spacing:-0.22px;">Total Sales of Raw Materials</span><span style="left:335.4px;letter-spacing:0.02px;">Income Statement</span><span style="left:516.5px;letter-spacing:0.09px;">End-Total</span><span style="left:590.4px;letter-spacing:-0.45px;transform:scaleX(0.978);transform-origin:0 0;">6205..6295</span></div>
<div class="row" style="top:657px;left:22px"><span class="b" style="left:24.3px;letter-spacing:0.53px;">6405</span><span class="b" style="left:108.3px;letter-spacing:-0.41px;">Sales of Resources</span><span style="left:335.4px;letter-spacing:0.02px;">Income Statement</span><span style="left:516.5px;letter-spacing:0.12px;">Begin-Total</span></div>
<div class="row" style="top:680px;left:22px"><span style="left:24.3px;letter-spacing:-0.40px;">6410</span><span style="left:118.3px;letter-spacing:-0.14px;">Sales, Resources - Dom.</span><span style="left:335.4px;letter-spacing:0.02px;">Income Statement</span><span style="left:516.5px;letter-spacing:-0.04px;">Posting</span><span style="left:655.8px;letter-spacing:-0.45px;transform:scaleX(0.926);transform-origin:0 0;">S...</span><span style="left:678.3px;letter-spacing:-0.22px;">N...</span><span style="left:705.1px;letter-spacing:-0.45px;transform:scaleX(0.858);transform-origin:0 0;">SERVICES</span><span style="left:962.7px;letter-spacing:-0.40px;">6410</span></div>
<div class="row" style="top:703px;left:22px"><span style="left:24.3px;letter-spacing:-0.40px;">6420</span><span style="left:118.3px;letter-spacing:-0.17px;">Sales, Resources - EU</span><span style="left:335.4px;letter-spacing:0.02px;">Income Statement</span><span style="left:516.5px;letter-spacing:-0.04px;">Posting</span><span style="left:655.8px;letter-spacing:-0.45px;transform:scaleX(0.926);transform-origin:0 0;">S...</span><span style="left:678.3px;letter-spacing:-0.45px;transform:scaleX(0.834);transform-origin:0 0;">EU</span><span style="left:705.1px;letter-spacing:-0.45px;transform:scaleX(0.858);transform-origin:0 0;">SERVICES</span><span style="left:962.7px;letter-spacing:-0.40px;">6420</span></div>
</div></div>
<div class="a" style="left:1px;top:792px;width:11px;height:256px;background:#f8f6f6;border-right:1px solid #cfcfcf"></div>
<div class="a" style="left:1px;top:802px;width:1px;height:246px;background:#2a8fc0"></div>
<div class="a" style="left:0;top:800.8px;width:1254px;height:247.2px;overflow:hidden">
<div class="a" style="left:0;top:-800.8px;width:1254px;height:1074px">
<div class="row" style="top:793px;left:23px"><span class="b" style="left:24.3px;letter-spacing:0.53px;">9290</span><span class="b" style="left:98.3px;letter-spacing:-0.20px;">Total Interest Expenses</span><span style="left:335.4px;letter-spacing:0.02px;">Income Statement</span><span style="left:516.5px;letter-spacing:0.09px;">End-Total</span><span style="left:590.4px;letter-spacing:-0.45px;transform:scaleX(0.974);transform-origin:0 0;">9200..9290</span></div>
<div class="row" style="top:816px;left:23px"><span style="left:24.3px;letter-spacing:-0.40px;">9310</span><span style="left:98.3px;letter-spacing:-0.38px;">Unrealized FX Gains</span><span style="left:335.4px;letter-spacing:0.02px;">Income Statement</span><span style="left:516.5px;letter-spacing:-0.04px;">Posting</span><span style="left:962.7px;letter-spacing:-0.40px;">9310</span></div>
<div class="row" style="top:839px;left:23px"><span style="left:24.3px;letter-spacing:-0.40px;">9320</span><span style="left:98.3px;letter-spacing:-0.45px;">Unrealized FX Losses</span><span style="left:335.4px;letter-spacing:0.02px;">Income Statement</span><span style="left:516.5px;letter-spacing:-0.04px;">Posting</span><span style="left:962.7px;letter-spacing:-0.40px;">9320</span></div>
<div class="row" style="top:862px;left:23px"><span style="left:24.3px;letter-spacing:-0.40px;">9330</span><span style="left:98.3px;letter-spacing:-0.45px;transform:scaleX(0.989);transform-origin:0 0;">Realized FX Gains</span><span style="left:335.4px;letter-spacing:0.02px;">Income Statement</span><span style="left:516.5px;letter-spacing:-0.04px;">Posting</span><span style="left:962.7px;letter-spacing:-0.40px;">9330</span></div>
<div class="row" style="top:885px;left:23px"><span style="left:24.3px;letter-spacing:-0.40px;">9340</span><span style="left:98.3px;letter-spacing:-0.45px;transform:scaleX(0.973);transform-origin:0 0;">Realized FX Losses</span><span style="left:335.4px;letter-spacing:0.02px;">Income Statement</span><span style="left:516.5px;letter-spacing:-0.04px;">Posting</span><span style="left:962.7px;letter-spacing:-0.40px;">9340</span></div>
<div class="row" style="top:908px;left:23px"><span class="b" style="left:24.3px;letter-spacing:0.53px;">9395</span><span class="b" style="left:98.3px;letter-spacing:-0.45px;transform:scaleX(0.984);transform-origin:0 0;">NI BEFORE EXTR. ITEMS &amp; TAXES</span><span style="left:335.4px;letter-spacing:0.02px;">Income Statement</span><span style="left:516.5px;letter-spacing:0.16px;">Total</span><span style="left:590.4px;letter-spacing:-0.45px;transform:scaleX(0.971);transform-origin:0 0;">6000..9395</span></div>
<div class="row" style="top:931px;left:23px"><span style="left:24.3px;letter-spacing:-0.40px;">9410</span><span style="left:98.3px;letter-spacing:-0.07px;">Extraordinary Income</span><span style="left:335.4px;letter-spacing:0.02px;">Income Statement</span><span style="left:516.5px;letter-spacing:-0.04px;">Posting</span></div>
<div class="row" style="top:954px;left:23px"><span style="left:24.3px;letter-spacing:-0.40px;">9420</span><span style="left:98.3px;letter-spacing:-0.38px;">Extraordinary Expenses</span><span style="left:335.4px;letter-spacing:0.02px;">Income Statement</span><span style="left:516.5px;letter-spacing:-0.04px;">Posting</span></div>
<div class="row" style="top:977px;left:23px"><span class="b" style="left:24.3px;letter-spacing:0.53px;">9495</span><span class="b" style="left:98.3px;letter-spacing:-0.45px;transform:scaleX(0.965);transform-origin:0 0;">NET INCOME BEFORE TAXES</span><span style="left:335.4px;letter-spacing:0.02px;">Income Statement</span><span style="left:516.5px;letter-spacing:0.16px;">Total</span><span style="left:590.4px;letter-spacing:-0.45px;transform:scaleX(0.971);transform-origin:0 0;">6000..9495</span></div>
<div class="row" style="top:1000px;left:23px"><span style="left:24.3px;letter-spacing:-0.40px;">9510</span><span style="left:98.3px;letter-spacing:-0.13px;">Corporate Tax</span><span style="left:335.4px;letter-spacing:0.02px;">Income Statement</span><span style="left:516.5px;letter-spacing:-0.04px;">Posting</span></div>
<div class="row" style="top:1023px;left:23px"><span class="b" style="left:24.3px;letter-spacing:0.53px;">9999</span><span class="b" style="left:98.3px;letter-spacing:-0.39px;">NET INCOME</span><span style="left:335.4px;letter-spacing:0.02px;">Income Statement</span><span style="left:516.5px;letter-spacing:0.16px;">Total</span><span style="left:590.4px;letter-spacing:-0.45px;transform:scaleX(0.971);transform-origin:0 0;">6000..9999</span></div>
</div></div>
<div class="a" style="left:1134px;top:795px;width:16px;height:252px;background:#efefef"></div>
<div class="a" style="left:1134px;top:978px;width:15px;height:53px;background:#c8c8c8"></div>
<svg style="left:1138px;top:1037px" width="8" height="6" viewBox="0 0 8 6"><path d="M1 1.2 L4 4.4 L7 1.2" stroke="#484848" stroke-width="2.2" fill="none"/></svg>
<svg style="left:8px;top:436.0px" width="4" height="7" viewBox="0 0 4 7"><path d="M3 0.5 H1.2 V6.5 H3" stroke="#7a7a7a" stroke-width="1" fill="none"/></svg>
<svg style="left:8px;top:456.5px" width="4" height="7" viewBox="0 0 4 7"><path d="M3 0.5 H1.2 V6.5 H3" stroke="#7a7a7a" stroke-width="1" fill="none"/></svg>
<svg style="left:8px;top:477.0px" width="4" height="7" viewBox="0 0 4 7"><path d="M3 0.5 H1.2 V6.5 H3" stroke="#7a7a7a" stroke-width="1" fill="none"/></svg>
<svg style="left:8px;top:496.5px" width="4" height="7" viewBox="0 0 4 7"><path d="M3 0.5 H1.2 V6.5 H3" stroke="#7a7a7a" stroke-width="1" fill="none"/></svg>
<svg style="left:8px;top:556.2px" width="4" height="7" viewBox="0 0 4 7"><path d="M3 0.5 H1.2 V6.5 H3" stroke="#7a7a7a" stroke-width="1" fill="none"/></svg>
<svg style="left:8px;top:597.0px" width="4" height="7" viewBox="0 0 4 7"><path d="M3 0.5 H1.2 V6.5 H3" stroke="#7a7a7a" stroke-width="1" fill="none"/></svg>
<svg style="left:8px;top:616.5px" width="4" height="7" viewBox="0 0 4 7"><path d="M3 0.5 H1.2 V6.5 H3" stroke="#7a7a7a" stroke-width="1" fill="none"/></svg>
<div class="a" style="left:9px;top:221px;width:2px;height:2px;background:#555"></div>
<div class="a" style="left:3px;top:856px;width:8px;height:1px;background:#c8c8c8"></div>
<svg style="left:2px;top:1030px" width="6" height="6" viewBox="0 0 6 6"><path d="M0 1 H5 M1 3 H5 M3 5 H5" stroke="#8a8a8a" stroke-width="1"/></svg>
<svg style="left:0;top:712px" width="1254" height="26" viewBox="0 712 1254 26"><defs><linearGradient id="bg" x1="0" y1="0" x2="0" y2="1"><stop offset="0" stop-color="#c9c9c9"/><stop offset="0.45" stop-color="#cfcfcf"/><stop offset="1" stop-color="#fafafa"/></linearGradient></defs><rect x="8" y="724" width="1246" height="7.5" fill="url(#bg)"/><linearGradient id="tg0" gradientUnits="userSpaceOnUse" x1="13.6" y1="723.5" x2="12.1" y2="729.5"><stop offset="0" stop-color="#838383"/><stop offset="0.55" stop-color="#929292"/><stop offset="1" stop-color="#cfcfcf"/></linearGradient><path d="M-2.4 720.3 L5.6 722.8 L29.6 730.2 L30.6 731.4 L21.6 731.2 L7.6 728.6 L0.6 730.6 Z" fill="url(#tg0)"/><ellipse cx="-2.2" cy="725" rx="4.1" ry="5.6" fill="#898989"/><linearGradient id="tg1" gradientUnits="userSpaceOnUse" x1="54.0" y1="723.5" x2="52.5" y2="729.5"><stop offset="0" stop-color="#838383"/><stop offset="0.55" stop-color="#929292"/><stop offset="1" stop-color="#cfcfcf"/></linearGradient><path d="M38.0 720.3 L46.0 722.8 L70.0 730.2 L71.0 731.4 L62.0 731.2 L48.0 728.6 L41.0 730.6 Z" fill="url(#tg1)"/><ellipse cx="38.2" cy="725" rx="4.1" ry="5.6" fill="#898989"/><linearGradient id="tg2" gradientUnits="userSpaceOnUse" x1="94.4" y1="723.5" x2="92.9" y2="729.5"><stop offset="0" stop-color="#838383"/><stop offset="0.55" stop-color="#929292"/><stop offset="1" stop-color="#cfcfcf"/></linearGradient><path d="M78.4 720.3 L86.4 722.8 L110.4 730.2 L111.4 731.4 L102.4 731.2 L88.4 728.6 L81.4 730.6 Z" fill="url(#tg2)"/><ellipse cx="78.6" cy="725" rx="4.1" ry="5.6" fill="#898989"/><linearGradient id="tg3" gradientUnits="userSpaceOnUse" x1="134.8" y1="723.5" x2="133.3" y2="729.5"><stop offset="0" stop-color="#838383"/><stop offset="0.55" stop-color="#929292"/><stop offset="1" stop-color="#cfcfcf"/></linearGradient><path d="M118.8 720.3 L126.8 722.8 L150.8 730.2 L151.8 731.4 L142.8 731.2 L128.8 728.6 L121.8 730.6 Z" fill="url(#tg3)"/><ellipse cx="119.0" cy="725" rx="4.1" ry="5.6" fill="#898989"/><linearGradient id="tg4" gradientUnits="userSpaceOnUse" x1="175.2" y1="723.5" x2="173.7" y2="729.5"><stop offset="0" stop-color="#838383"/><stop offset="0.55" stop-color="#929292"/><stop offset="1" stop-color="#cfcfcf"/></linearGradient><path d="M159.2 720.3 L167.2 722.8 L191.2 730.2 L192.2 731.4 L183.2 731.2 L169.2 728.6 L162.2 730.6 Z" fill="url(#tg4)"/><ellipse cx="159.4" cy="725" rx="4.1" ry="5.6" fill="#898989"/><linearGradient id="tg5" gradientUnits="userSpaceOnUse" x1="215.6" y1="723.5" x2="214.1" y2="729.5"><stop offset="0" stop-color="#838383"/><stop offset="0.55" stop-color="#929292"/><stop offset="1" stop-color="#cfcfcf"/></linearGradient><path d="M199.6 720.3 L207.6 722.8 L231.6 730.2 L232.6 731.4 L223.6 731.2 L209.6 728.6 L202.6 730.6 Z" fill="url(#tg5)"/><ellipse cx="199.8" cy="725" rx="4.1" ry="5.6" fill="#898989"/><linearGradient id="tg6" gradientUnits="userSpaceOnUse" x1="256.0" y1="723.5" x2="254.5" y2="729.5"><stop offset="0" stop-color="#838383"/><stop offset="0.55" stop-color="#929292"/><stop offset="1" stop-color="#cfcfcf"/></linearGradient><path d="M240.0 720.3 L248.0 722.8 L272.0 730.2 L273.0 731.4 L264.0 731.2 L250.0 728.6 L243.0 730.6 Z" fill="url(#tg6)"/><ellipse cx="240.2" cy="725" rx="4.1" ry="5.6" fill="#898989"/><linearGradient id="tg7" gradientUnits="userSpaceOnUse" x1="296.4" y1="723.5" x2="294.9" y2="729.5"><stop offset="0" stop-color="#838383"/><stop offset="0.55" stop-color="#929292"/><stop offset="1" stop-color="#cfcfcf"/></linearGradient><path d="M280.4 720.3 L288.4 722.8 L312.4 730.2 L313.4 731.4 L304.4 731.2 L290.4 728.6 L283.4 730.6 Z" fill="url(#tg7)"/><ellipse cx="280.6" cy="725" rx="4.1" ry="5.6" fill="#898989"/><linearGradient id="tg8" gradientUnits="userSpaceOnUse" x1="336.8" y1="723.5" x2="335.3" y2="729.5"><stop offset="0" stop-color="#838383"/><stop offset="0.55" stop-color="#929292"/><stop offset="1" stop-color="#cfcfcf"/></linearGradient><path d="M320.8 720.3 L328.8 722.8 L352.8 730.2 L353.8 731.4 L344.8 731.2 L330.8 728.6 L323.8 730.6 Z" fill="url(#tg8)"/><ellipse cx="321.0" cy="725" rx="4.1" ry="5.6" fill="#898989"/><linearGradient id="tg9" gradientUnits="userSpaceOnUse" x1="377.2" y1="723.5" x2="375.7" y2="729.5"><stop offset="0" stop-color="#838383"/><stop offset="0.55" stop-color="#929292"/><stop offset="1" stop-color="#cfcfcf"/></linearGradient><path d="M361.2 720.3 L369.2 722.8 L393.2 730.2 L394.2 731.4 L385.2 731.2 L371.2 728.6 L364.2 730.6 Z" fill="url(#tg9)"/><ellipse cx="361.4" cy="725" rx="4.1" ry="5.6" fill="#898989"/><linearGradient id="tg10" gradientUnits="userSpaceOnUse" x1="417.6" y1="723.5" x2="416.1" y2="729.5"><stop offset="0" stop-color="#838383"/><stop offset="0.55" stop-color="#929292"/><stop offset="1" stop-color="#cfcfcf"/></linearGradient><path d="M401.6 720.3 L409.6 722.8 L433.6 730.2 L434.6 731.4 L425.6 731.2 L411.6 728.6 L404.6 730.6 Z" fill="url(#tg10)"/><ellipse cx="401.8" cy="725" rx="4.1" ry="5.6" fill="#898989"/><linearGradient id="tg11" gradientUnits="userSpaceOnUse" x1="458.0" y1="723.5" x2="456.5" y2="729.5"><stop offset="0" stop-color="#838383"/><stop offset="0.55" stop-color="#929292"/><stop offset="1" stop-color="#cfcfcf"/></linearGradient><path d="M442.0 720.3 L450.0 722.8 L474.0 730.2 L475.0 731.4 L466.0 731.2 L452.0 728.6 L445.0 730.6 Z" fill="url(#tg11)"/><ellipse cx="442.2" cy="725" rx="4.1" ry="5.6" fill="#898989"/><linearGradient id="tg12" gradientUnits="userSpaceOnUse" x1="498.4" y1="723.5" x2="496.9" y2="729.5"><stop offset="0" stop-color="#838383"/><stop offset="0.55" stop-color="#929292"/><stop offset="1" stop-color="#cfcfcf"/></linearGradient><path d="M482.4 720.3 L490.4 722.8 L514.4 730.2 L515.4 731.4 L506.4 731.2 L492.4 728.6 L485.4 730.6 Z" fill="url(#tg12)"/><ellipse cx="482.6" cy="725" rx="4.1" ry="5.6" fill="#898989"/><linearGradient id="tg13" gradientUnits="userSpaceOnUse" x1="538.8" y1="723.5" x2="537.3" y2="729.5"><stop offset="0" stop-color="#838383"/><stop offset="0.55" stop-color="#929292"/><stop offset="1" stop-color="#cfcfcf"/></linearGradient><path d="M522.8 720.3 L530.8 722.8 L554.8 730.2 L555.8 731.4 L546.8 731.2 L532.8 728.6 L525.8 730.6 Z" fill="url(#tg13)"/><ellipse cx="523.0" cy="725" rx="4.1" ry="5.6" fill="#898989"/><linearGradient id="tg14" gradientUnits="userSpaceOnUse" x1="579.2" y1="723.5" x2="577.7" y2="729.5"><stop offset="0" stop-color="#838383"/><stop offset="0.55" stop-color="#929292"/><stop offset="1" stop-color="#cfcfcf"/></linearGradient><path d="M563.2 720.3 L571.2 722.8 L595.2 730.2 L596.2 731.4 L587.2 731.2 L573.2 728.6 L566.2 730.6 Z" fill="url(#tg14)"/><ellipse cx="563.4" cy="725" rx="4.1" ry="5.6" fill="#898989"/><linearGradient id="tg15" gradientUnits="userSpaceOnUse" x1="619.6" y1="723.5" x2="618.1" y2="729.5"><stop offset="0" stop-color="#838383"/><stop offset="0.55" stop-color="#929292"/><stop offset="1" stop-color="#cfcfcf"/></linearGradient><path d="M603.6 720.3 L611.6 722.8 L635.6 730.2 L636.6 731.4 L627.6 731.2 L613.6 728.6 L606.6 730.6 Z" fill="url(#tg15)"/><ellipse cx="603.8" cy="725" rx="4.1" ry="5.6" fill="#898989"/><linearGradient id="tg16" gradientUnits="userSpaceOnUse" x1="660.0" y1="723.5" x2="658.5" y2="729.5"><stop offset="0" stop-color="#838383"/><stop offset="0.55" stop-color="#929292"/><stop offset="1" stop-color="#cfcfcf"/></linearGradient><path d="M644.0 720.3 L652.0 722.8 L676.0 730.2 L677.0 731.4 L668.0 731.2 L654.0 728.6 L647.0 730.6 Z" fill="url(#tg16)"/><ellipse cx="644.2" cy="725" rx="4.1" ry="5.6" fill="#898989"/><linearGradient id="tg17" gradientUnits="userSpaceOnUse" x1="700.4" y1="723.5" x2="698.9" y2="729.5"><stop offset="0" stop-color="#838383"/><stop offset="0.55" stop-color="#929292"/><stop offset="1" stop-color="#cfcfcf"/></linearGradient><path d="M684.4 720.3 L692.4 722.8 L716.4 730.2 L717.4 731.4 L708.4 731.2 L694.4 728.6 L687.4 730.6 Z" fill="url(#tg17)"/><ellipse cx="684.6" cy="725" rx="4.1" ry="5.6" fill="#898989"/><linearGradient id="tg18" gradientUnits="userSpaceOnUse" x1="740.8" y1="723.5" x2="739.3" y2="729.5"><stop offset="0" stop-color="#838383"/><stop offset="0.55" stop-color="#929292"/><stop offset="1" stop-color="#cfcfcf"/></linearGradient><path d="M724.8 720.3 L732.8 722.8 L756.8 730.2 L757.8 731.4 L748.8 731.2 L734.8 728.6 L727.8 730.6 Z" fill="url(#tg18)"/><ellipse cx="725.0" cy="725" rx="4.1" ry="5.6" fill="#898989"/><linearGradient id="tg19" gradientUnits="userSpaceOnUse" x1="781.2" y1="723.5" x2="779.7" y2="729.5"><stop offset="0" stop-color="#838383"/><stop offset="0.55" stop-color="#929292"/><stop offset="1" stop-color="#cfcfcf"/></linearGradient><path d="M765.2 720.3 L773.2 722.8 L797.2 730.2 L798.2 731.4 L789.2 731.2 L775.2 728.6 L768.2 730.6 Z" fill="url(#tg19)"/><ellipse cx="765.4" cy="725" rx="4.1" ry="5.6" fill="#898989"/><linearGradient id="tg20" gradientUnits="userSpaceOnUse" x1="821.6" y1="723.5" x2="820.1" y2="729.5"><stop offset="0" stop-color="#838383"/><stop offset="0.55" stop-color="#929292"/><stop offset="1" stop-color="#cfcfcf"/></linearGradient><path d="M805.6 720.3 L813.6 722.8 L837.6 730.2 L838.6 731.4 L829.6 731.2 L815.6 728.6 L808.6 730.6 Z" fill="url(#tg20)"/><ellipse cx="805.8" cy="725" rx="4.1" ry="5.6" fill="#898989"/><linearGradient id="tg21" gradientUnits="userSpaceOnUse" x1="862.0" y1="723.5" x2="860.5" y2="729.5"><stop offset="0" stop-color="#838383"/><stop offset="0.55" stop-color="#929292"/><stop offset="1" stop-color="#cfcfcf"/></linearGradient><path d="M846.0 720.3 L854.0 722.8 L878.0 730.2 L879.0 731.4 L870.0 731.2 L856.0 728.6 L849.0 730.6 Z" fill="url(#tg21)"/><ellipse cx="846.2" cy="725" rx="4.1" ry="5.6" fill="#898989"/><linearGradient id="tg22" gradientUnits="userSpaceOnUse" x1="902.4" y1="723.5" x2="900.9" y2="729.5"><stop offset="0" stop-color="#838383"/><stop offset="0.55" stop-color="#929292"/><stop offset="1" stop-color="#cfcfcf"/></linearGradient><path d="M886.4 720.3 L894.4 722.8 L918.4 730.2 L919.4 731.4 L910.4 731.2 L896.4 728.6 L889.4 730.6 Z" fill="url(#tg22)"/><ellipse cx="886.6" cy="725" rx="4.1" ry="5.6" fill="#898989"/><linearGradient id="tg23" gradientUnits="userSpaceOnUse" x1="942.8" y1="723.5" x2="941.3" y2="729.5"><stop offset="0" stop-color="#838383"/><stop offset="0.55" stop-color="#929292"/><stop offset="1" stop-color="#cfcfcf"/></linearGradient><path d="M926.8 720.3 L934.8 722.8 L958.8 730.2 L959.8 731.4 L950.8 731.2 L936.8 728.6 L929.8 730.6 Z" fill="url(#tg23)"/><ellipse cx="927.0" cy="725" rx="4.1" ry="5.6" fill="#898989"/><linearGradient id="tg24" gradientUnits="userSpaceOnUse" x1="983.2" y1="723.5" x2="981.7" y2="729.5"><stop offset="0" stop-color="#838383"/><stop offset="0.55" stop-color="#929292"/><stop offset="1" stop-color="#cfcfcf"/></linearGradient><path d="M967.2 720.3 L975.2 722.8 L999.2 730.2 L1000.2 731.4 L991.2 731.2 L977.2 728.6 L970.2 730.6 Z" fill="url(#tg24)"/><ellipse cx="967.4" cy="725" rx="4.1" ry="5.6" fill="#898989"/><linearGradient id="tg25" gradientUnits="userSpaceOnUse" x1="1023.6" y1="723.5" x2="1022.1" y2="729.5"><stop offset="0" stop-color="#838383"/><stop offset="0.55" stop-color="#929292"/><stop offset="1" stop-color="#cfcfcf"/></linearGradient><path d="M1007.6 720.3 L1015.6 722.8 L1039.6 730.2 L1040.6 731.4 L1031.6 731.2 L1017.6 728.6 L1010.6 730.6 Z" fill="url(#tg25)"/><ellipse cx="1007.8" cy="725" rx="4.1" ry="5.6" fill="#898989"/><linearGradient id="tg26" gradientUnits="userSpaceOnUse" x1="1064.0" y1="723.5" x2="1062.5" y2="729.5"><stop offset="0" stop-color="#838383"/><stop offset="0.55" stop-color="#929292"/><stop offset="1" stop-color="#cfcfcf"/></linearGradient><path d="M1048.0 720.3 L1056.0 722.8 L1080.0 730.2 L1081.0 731.4 L1072.0 731.2 L1058.0 728.6 L1051.0 730.6 Z" fill="url(#tg26)"/><ellipse cx="1048.2" cy="725" rx="4.1" ry="5.6" fill="#898989"/><linearGradient id="tg27" gradientUnits="userSpaceOnUse" x1="1104.4" y1="723.5" x2="1102.9" y2="729.5"><stop offset="0" stop-color="#838383"/><stop offset="0.55" stop-color="#929292"/><stop offset="1" stop-color="#cfcfcf"/></linearGradient><path d="M1088.4 720.3 L1096.4 722.8 L1120.4 730.2 L1121.4 731.4 L1112.4 731.2 L1098.4 728.6 L1091.4 730.6 Z" fill="url(#tg27)"/><ellipse cx="1088.6" cy="725" rx="4.1" ry="5.6" fill="#898989"/><linearGradient id="tg28" gradientUnits="userSpaceOnUse" x1="1144.8" y1="723.5" x2="1143.3" y2="729.5"><stop offset="0" stop-color="#838383"/><stop offset="0.55" stop-color="#929292"/><stop offset="1" stop-color="#cfcfcf"/></linearGradient><path d="M1128.8 720.3 L1136.8 722.8 L1160.8 730.2 L1161.8 731.4 L1152.8 731.2 L1138.8 728.6 L1131.8 730.6 Z" fill="url(#tg28)"/><ellipse cx="1129.0" cy="725" rx="4.1" ry="5.6" fill="#898989"/><linearGradient id="tg29" gradientUnits="userSpaceOnUse" x1="1185.2" y1="723.5" x2="1183.7" y2="729.5"><stop offset="0" stop-color="#838383"/><stop offset="0.55" stop-color="#929292"/><stop offset="1" stop-color="#cfcfcf"/></linearGradient><path d="M1169.2 720.3 L1177.2 722.8 L1201.2 730.2 L1202.2 731.4 L1193.2 731.2 L1179.2 728.6 L1172.2 730.6 Z" fill="url(#tg29)"/><ellipse cx="1169.4" cy="725" rx="4.1" ry="5.6" fill="#898989"/><linearGradient id="tg30" gradientUnits="userSpaceOnUse" x1="1225.6" y1="723.5" x2="1224.1" y2="729.5"><stop offset="0" stop-color="#838383"/><stop offset="0.55" stop-color="#929292"/><stop offset="1" stop-color="#cfcfcf"/></linearGradient><path d="M1209.6 720.3 L1217.6 722.8 L1241.6 730.2 L1242.6 731.4 L1233.6 731.2 L1219.6 728.6 L1212.6 730.6 Z" fill="url(#tg30)"/><ellipse cx="1209.8" cy="725" rx="4.1" ry="5.6" fill="#898989"/><linearGradient id="tg31" gradientUnits="userSpaceOnUse" x1="1266.0" y1="723.5" x2="1264.5" y2="729.5"><stop offset="0" stop-color="#838383"/><stop offset="0.55" stop-color="#929292"/><stop offset="1" stop-color="#cfcfcf"/></linearGradient><path d="M1250.0 720.3 L1258.0 722.8 L1282.0 730.2 L1283.0 731.4 L1274.0 731.2 L1260.0 728.6 L1253.0 730.6 Z" fill="url(#tg31)"/><ellipse cx="1250.2" cy="725" rx="4.1" ry="5.6" fill="#898989"/><rect x="0" y="723.5" width="8" height="14.5" fill="#fff"/></svg>
<svg style="left:0;top:0" width="1254" height="1074" viewBox="0 0 1254 1074"><rect x="80.0" y="792" width="9" height="1" fill="#ececec"/><rect x="120.4" y="792" width="9" height="1" fill="#ececec"/><rect x="160.8" y="792" width="9" height="1" fill="#ececec"/><rect x="201.2" y="792" width="9" height="1" fill="#ececec"/><rect x="241.6" y="792" width="9" height="1" fill="#ececec"/><rect x="282.0" y="792" width="9" height="1" fill="#ececec"/><rect x="322.4" y="792" width="9" height="1" fill="#ececec"/><rect x="362.8" y="792" width="9" height="1" fill="#ececec"/><rect x="403.2" y="792" width="9" height="1" fill="#ececec"/><rect x="443.6" y="792" width="9" height="1" fill="#ececec"/><rect x="484.0" y="792" width="9" height="1" fill="#ececec"/><rect x="524.4" y="792" width="9" height="1" fill="#ececec"/><rect x="564.8" y="792" width="9" height="1" fill="#ececec"/><rect x="605.2" y="792" width="9" height="1" fill="#ececec"/><rect x="645.6" y="792" width="9" height="1" fill="#ececec"/><rect x="686.0" y="792" width="9" height="1" fill="#ececec"/><rect x="726.4" y="792" width="9" height="1" fill="#ececec"/><rect x="766.8" y="792" width="9" height="1" fill="#ececec"/><rect x="807.2" y="792" width="9" height="1" fill="#ececec"/><rect x="847.6" y="792" width="9" height="1" fill="#ececec"/><rect x="888.0" y="792" width="9" height="1" fill="#ececec"/><rect x="928.4" y="792" width="9" height="1" fill="#ececec"/><rect x="968.8" y="792" width="9" height="1" fill="#ececec"/><rect x="1009.2" y="792" width="9" height="1" fill="#ececec"/><rect x="1049.6" y="792" width="9" height="1" fill="#ececec"/><rect x="1090.0" y="792" width="9" height="1" fill="#ececec"/><rect x="1130.4" y="792" width="9" height="1" fill="#ececec"/></svg>
<div class="a" style="left:0;top:1048px;width:1254px;height:26px;background:#0f6ec6"></div>
<div class="t " style="left:9.8px;top:1054.0px;font-size:12px;letter-spacing:-0.17px;color:#fff">CRONUS International Ltd.</div></body></html>
